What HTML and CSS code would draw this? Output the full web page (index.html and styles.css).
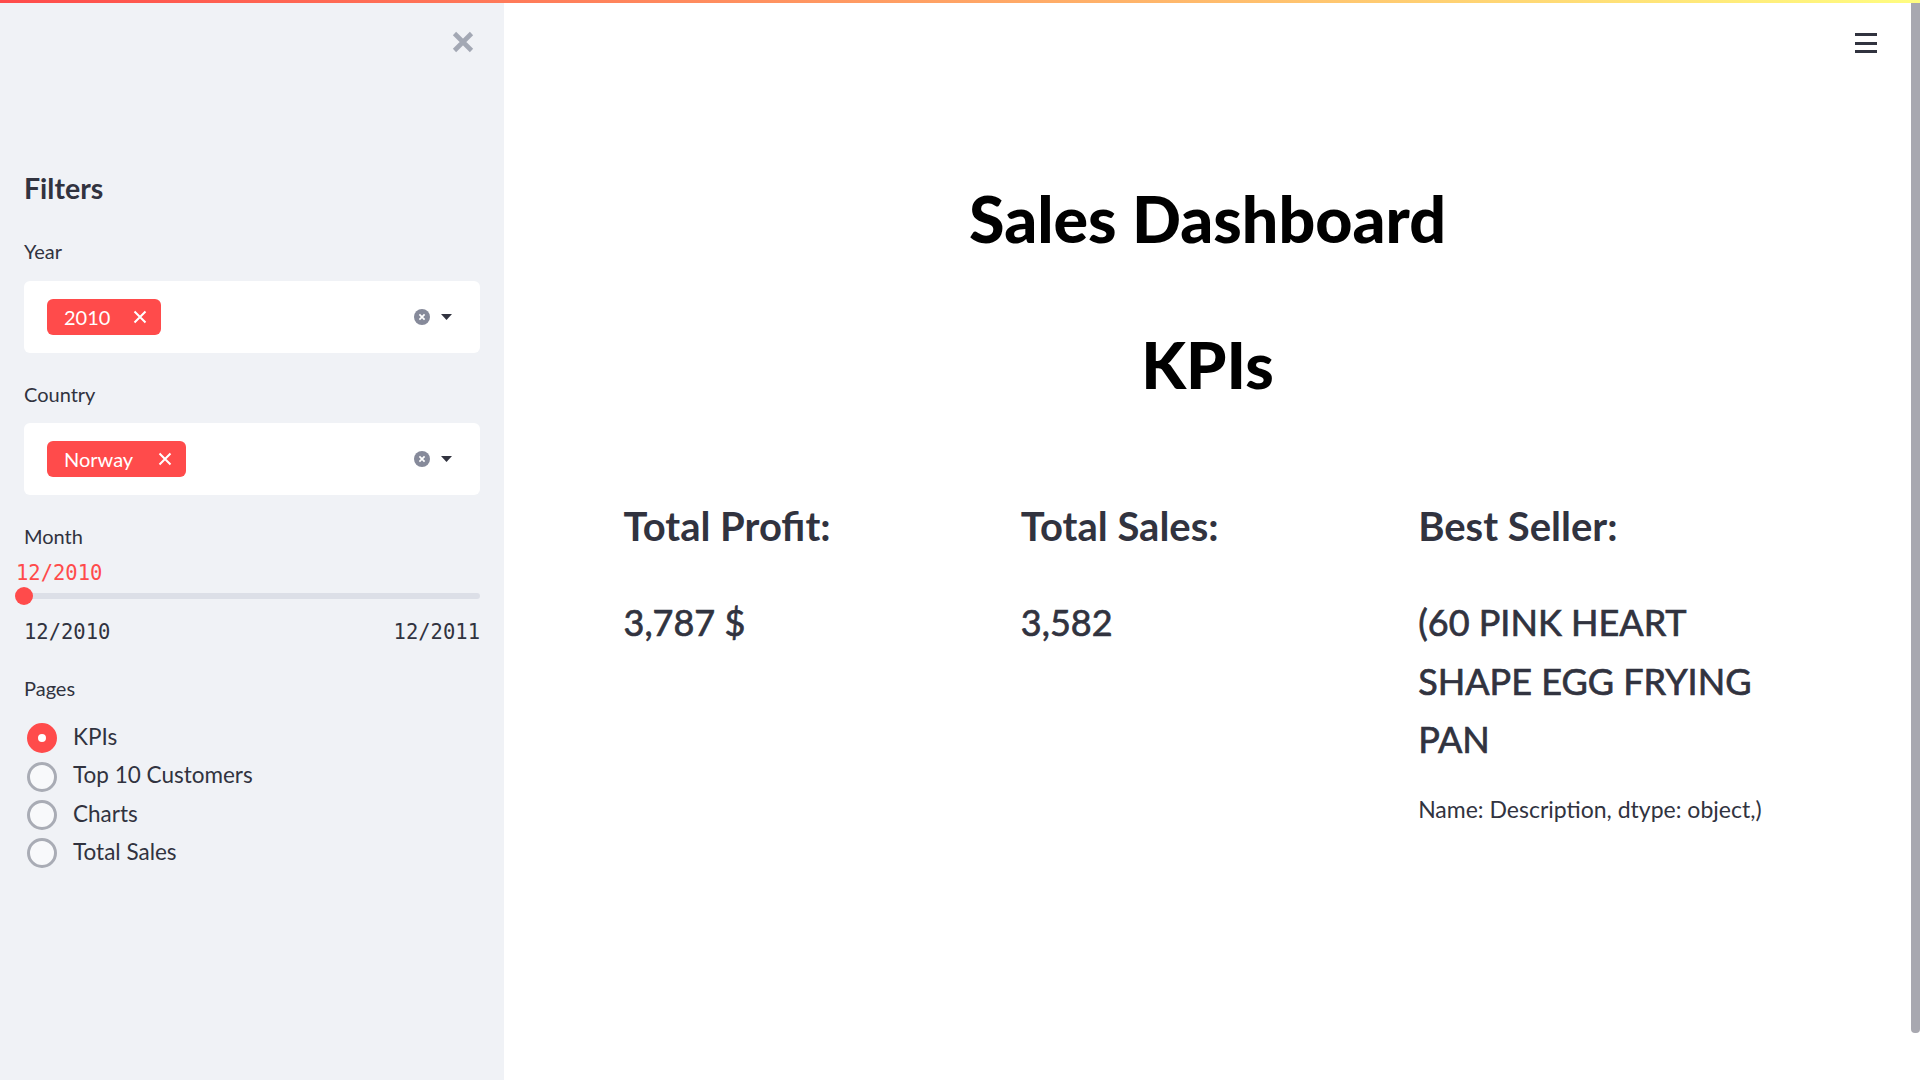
FILE: index.html
```html
<!DOCTYPE html>
<html lang="en">
<head>
<meta charset="utf-8">
<title>Sales Dashboard</title>
<link rel="stylesheet" href="styles.css">
</head>
<body>
<div class="decoration"></div>
<div class="app">
  <aside class="sidebar">
    <div class="sidebar-top">
      <svg class="close-icon" width="22" height="22" viewBox="0 0 22 22"><path d="M2.5 2.5L19.5 19.5M19.5 2.5L2.5 19.5" stroke="#a3a8b4" stroke-width="4.6" fill="none"/></svg>
    </div>
    <div class="sidebar-content">
      <h2 class="side-title">Filters</h2>

      <div class="label label-year">Year</div>
      <div class="select">
        <span class="tag tag-year">2010<svg class="tag-x" width="14" height="14" viewBox="0 0 14 14"><path d="M1.5 1.5L12.5 12.5M12.5 1.5L1.5 12.5" stroke="#fff" stroke-width="2" fill="none"/></svg></span>
        <span class="select-icons">
          <svg width="16" height="16" viewBox="0 0 16 16"><circle cx="8" cy="8" r="8" fill="#868a9a"/><path d="M5.4 5.4L10.6 10.6M10.6 5.4L5.4 10.6" stroke="#fff" stroke-width="1.7"/></svg>
          <svg class="caret" width="11" height="6" viewBox="0 0 11 6"><path d="M0 0H11L5.5 6Z" fill="#31333f"/></svg>
        </span>
      </div>

      <div class="label label-country">Country</div>
      <div class="select select-country">
        <span class="tag tag-country">Norway<svg class="tag-x" width="14" height="14" viewBox="0 0 14 14"><path d="M1.5 1.5L12.5 12.5M12.5 1.5L1.5 12.5" stroke="#fff" stroke-width="2" fill="none"/></svg></span>
        <span class="select-icons">
          <svg width="16" height="16" viewBox="0 0 16 16"><circle cx="8" cy="8" r="8" fill="#868a9a"/><path d="M5.4 5.4L10.6 10.6M10.6 5.4L5.4 10.6" stroke="#fff" stroke-width="1.7"/></svg>
          <svg class="caret" width="11" height="6" viewBox="0 0 11 6"><path d="M0 0H11L5.5 6Z" fill="#31333f"/></svg>
        </span>
      </div>

      <div class="label label-month">Month</div>
      <div class="slider-value">12/2010</div>
      <div class="slider">
        <div class="track"></div>
        <div class="thumb"></div>
      </div>
      <div class="slider-range"><span>12/2010</span><span>12/2011</span></div>

      <div class="label label-pages">Pages</div>
      <div class="radios">
        <div class="radio"><span class="dot selected"></span><span class="radio-text">KPIs</span></div>
        <div class="radio"><span class="dot"></span><span class="radio-text">Top 10 Customers</span></div>
        <div class="radio"><span class="dot"></span><span class="radio-text">Charts</span></div>
        <div class="radio"><span class="dot"></span><span class="radio-text">Total Sales</span></div>
      </div>
    </div>
  </aside>

  <main class="main">
    <div class="container">
      <h1 class="title title-main">Sales Dashboard</h1>
      <h1 class="title title-kpi">KPIs</h1>
      <div class="kpis">
        <div class="kpi">
          <h3 class="kpi-head">Total Profit:</h3>
          <div class="kpi-value">3,787 $</div>
        </div>
        <div class="kpi">
          <h3 class="kpi-head">Total Sales:</h3>
          <div class="kpi-value">3,582</div>
        </div>
        <div class="kpi">
          <h3 class="kpi-head">Best Seller:</h3>
          <div class="kpi-value">(60 PINK HEART<br>SHAPE EGG FRYING<br>PAN</div>
          <p class="kpi-note">Name: Description, dtype: object,)</p>
        </div>
      </div>
    </div>
  </main>
</div>
<div class="menu-btn"><span></span><span></span><span></span></div>
<div class="scroll-thumb"></div>
</body>
</html>
```

FILE: styles.css
```css
* { box-sizing: border-box; }
html, body {
  margin: 0;
  padding: 0;
  width: 1920px;
  height: 1080px;
  overflow: hidden;
  font-family: Lato, "Noto Sans", sans-serif;
  color: #31333f;
  background: #fff;
}
.decoration {
  position: absolute;
  top: 0; left: 0; right: 0;
  height: 3px;
  background: linear-gradient(90deg, #ff4b4b, #fffd80);
  z-index: 5;
}
.app {
  display: flex;
  height: 1080px;
}
.sidebar {
  width: 504px;
  flex: none;
  background: #f0f2f6;
  height: 1080px;
}
.sidebar-top {
  display: flex;
  justify-content: flex-end;
  padding: 31px 30px 0 0;
  height: 170px;
}
.close-icon { display: block; }
.sidebar-content {
  padding: 0 24px;
}
.side-title {
  margin: 0;
  font-size: 28.5px;
  line-height: 36px;
  font-weight: 700;
  color: #31333f;
}
.label {
  font-size: 20px;
  line-height: 28px;
  color: #31333f;
}
.label-year { margin-top: 31px; }
.label-country { margin-top: 27px; }
.label-month { margin-top: 27px; }
.label-pages { margin-top: 29px; }
.select {
  margin-top: 16px;
  height: 72px;
  background: #fff;
  border-radius: 6px;
  display: flex;
  align-items: center;
  justify-content: space-between;
  padding: 0 28px 0 23px;
}
.select-country { margin-top: 15px; }
.tag {
  height: 36px;
  background: #ff4b4b;
  color: #fff;
  border-radius: 6px;
  display: flex;
  align-items: center;
  font-size: 20px;
  padding: 0 14px 0 17px;
}
.tag-year .tag-x { margin-left: 23px; }
.tag-country .tag-x { margin-left: 25px; }
.tag-x { display: block; }
.select-icons {
  display: flex;
  align-items: center;
  gap: 11px;
}
.select-icons svg { display: block; }
.slider-value {
  margin-top: 10px;
  margin-left: -8px;
  font-family: "DejaVu Sans Mono", "Liberation Mono", monospace;
  font-size: 20.5px;
  line-height: 26px;
  color: #ff4b4b;
}
.slider {
  position: relative;
  margin-top: 1px;
  height: 18px;
  display: flex;
  align-items: center;
}
.track {
  width: 100%;
  height: 6px;
  border-radius: 3px;
  background: #dcdfe7;
}
.thumb {
  position: absolute;
  left: -9px;
  top: 0;
  width: 18px;
  height: 18px;
  border-radius: 50%;
  background: #ff4b4b;
}
.slider-range {
  margin-top: 14px;
  display: flex;
  justify-content: space-between;
  font-family: "DejaVu Sans Mono", "Liberation Mono", monospace;
  font-size: 20.5px;
  line-height: 26px;
  color: #31333f;
}
.radios {
  margin-top: 17px;
  padding-left: 3px;
}
.radio {
  height: 38.4px;
  display: flex;
  align-items: center;
}
.dot {
  width: 30px;
  height: 30px;
  border-radius: 50%;
  border: 3px solid #a9acb5;
  background: #f8f9fb;
  flex: none;
}
.dot.selected {
  border: 11px solid #ff4b4b;
  background: #fff;
}
.radio-text {
  margin-left: 16px;
  font-size: 22.5px;
  line-height: 38.4px;
  color: #31333f;
  position: relative;
  top: -1px;
}

.main {
  flex: 1;
  padding-right: 9px;
  height: 1080px;
}
.container {
  width: 1168px;
  margin: 0 auto;
  padding-top: 178px;
}
.title {
  margin: 0;
  text-align: center;
  font-size: 64.5px;
  line-height: 80px;
  font-weight: 900;
  color: #000;
}
.title-kpi { margin-top: 66px; }
.kpis {
  margin-top: 97px;
  display: grid;
  grid-template-columns: repeat(3, 1fr);
  gap: 24px;
}
.kpi-head {
  margin: 0;
  font-size: 40px;
  line-height: 50px;
  font-weight: 700;
  color: #31333f;
}
.kpi-value {
  margin-top: 42px;
  font-size: 36px;
  line-height: 58.5px;
  font-weight: 400;
  -webkit-text-stroke: 0.7px #31333f;
  color: #31333f;
}
.kpi-note {
  margin: 22px 0 0;
  font-size: 23px;
  line-height: 36px;
  color: #31333f;
}
.menu-btn {
  position: absolute;
  top: 33px;
  left: 1855px;
  width: 22px;
  display: flex;
  flex-direction: column;
  gap: 5.5px;
}
.menu-btn span {
  display: block;
  height: 3px;
  background: #31333f;
}
.scroll-thumb {
  position: absolute;
  top: 3px;
  left: 1911px;
  width: 9px;
  height: 1030px;
  background: #a8a8b0;
  border-radius: 0 0 4px 4px;
}
```
